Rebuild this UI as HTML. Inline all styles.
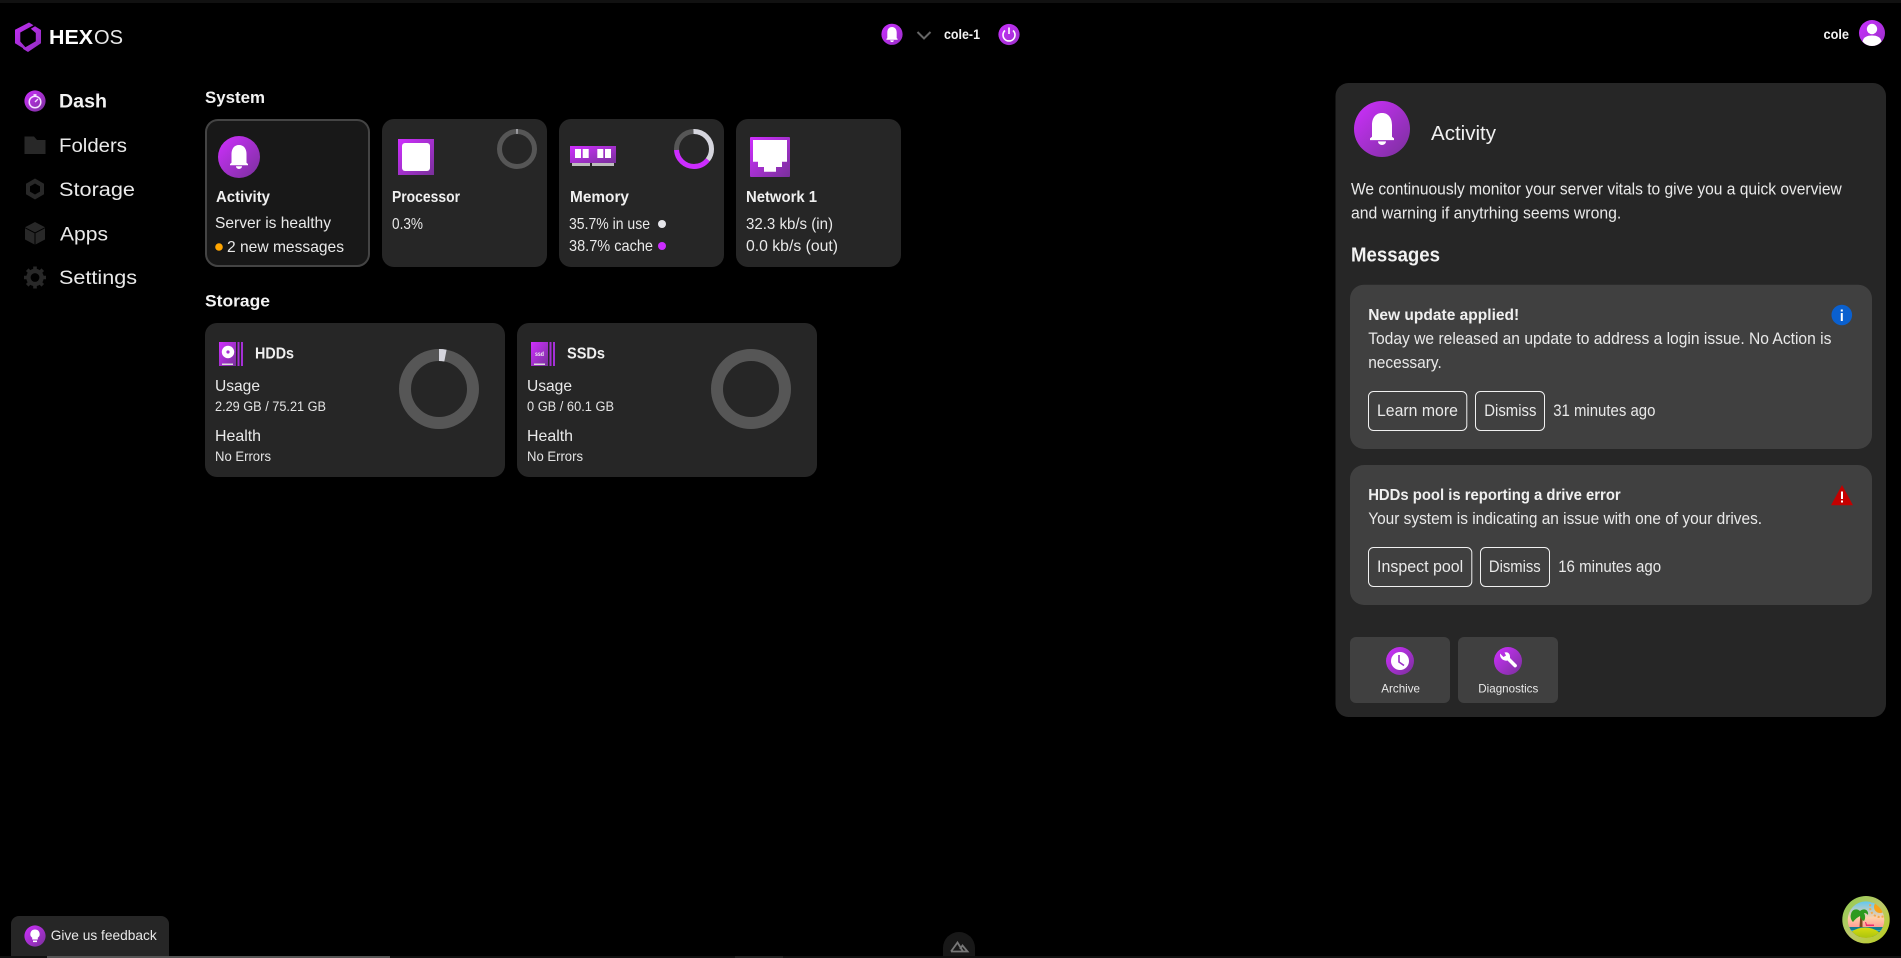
<!DOCTYPE html>
<html lang="en">
<head>
<meta charset="utf-8">
<title>HexOS Dashboard</title>
<style>
html,body{margin:0;padding:0;background:#000;width:1901px;height:958px;overflow:hidden}
svg{display:block}
text{font-family:"Liberation Sans",Arial,sans-serif;fill:#e9e9e9}
.b{font-weight:700;fill:#f2f2f2}
.t{font-size:16px;font-weight:700;fill:#f0f0f0}
.r{font-size:16px}
.s{font-size:13.5px;fill:#e4e4e4}
.h{font-size:17px;font-weight:700;fill:#f2f2f2}
.btn{fill:none;stroke:#f0f0f0;stroke-width:1}
.card{fill:#262626}
.msg{fill:#404040}
</style>
</head>
<body>
<svg width="1901" height="958" viewBox="0 0 1901 958" xmlns="http://www.w3.org/2000/svg">
<defs>
<linearGradient id="pg" x1="0" y1="0" x2="1" y2="1"><stop offset="0" stop-color="#cf2fff"/><stop offset="1" stop-color="#79309b"/></linearGradient>
<linearGradient id="lg" x1="0" y1="0" x2="1" y2="1"><stop offset="0" stop-color="#c62cf8"/><stop offset="1" stop-color="#8a2fb8"/></linearGradient>
<linearGradient id="av" x1="0" y1="0" x2="1" y2="1"><stop offset="0" stop-color="#c92fff"/><stop offset="1" stop-color="#9a2fc8"/></linearGradient>
<linearGradient id="sky" x1="0" y1="0" x2="0" y2="1"><stop offset="0" stop-color="#62c8ee"/><stop offset=".45" stop-color="#ffcfa8"/><stop offset=".7" stop-color="#ff9f96"/></linearGradient>
<linearGradient id="rng" x1="0" y1="0" x2="1" y2="1"><stop offset="0" stop-color="#8ecb4e"/><stop offset=".5" stop-color="#bcc86a"/><stop offset="1" stop-color="#b8d014"/></linearGradient>
<linearGradient id="isl" x1="0" y1="0" x2="0" y2="1"><stop offset="0" stop-color="#d8dc10"/><stop offset="1" stop-color="#5a9a08"/></linearGradient>
<clipPath id="ic"><circle cx="1866" cy="919.7" r="18.3"/></clipPath>
<symbol id="bell" viewBox="0 0 18 24"><path fill="#fff" d="M9 0C14 0 16.5 4 16.5 9V17.8L18 19V20.3H0V19L1.5 17.8V9C1.5 4 4 0 9 0ZM6 21.3H12C12 23 10.5 24 9 24S6 23 6 21.3Z"/></symbol>
</defs>

<rect width="1901" height="958" fill="#000"/>
<rect width="1901" height="3" fill="#111"/>

<!-- Logo -->
<path fill="url(#lg)" d="M29 22.5L33.5 25.2L20.3 32.5V41.5L25.5 47.3L24.3 49L15 43.3V29.7Z"/>
<path fill="url(#lg)" d="M35 26.3L41 30V43.3L28 52L22.8 48.7L35.8 41.3V33L30.8 28.8Z"/>
<text x="49" y="44" font-size="20" class="b" textLength="44" lengthAdjust="spacingAndGlyphs" style="fill:#fff">HEX</text>
<text x="94" y="44" font-size="20" textLength="29" lengthAdjust="spacingAndGlyphs" style="fill:#e8e8e8;font-weight:400">OS</text>

<!-- Center header -->
<circle cx="892" cy="34.3" r="10.6" fill="url(#av)"/>
<use href="#bell" x="886" y="27" width="12" height="15"/>
<path d="M917.5 32L924 38.5L930.5 32" fill="none" stroke="#666" stroke-width="2"/>
<text x="944" y="39" font-size="14" class="b" textLength="36" lengthAdjust="spacingAndGlyphs">cole-1</text>
<circle cx="1009" cy="34.5" r="10.6" fill="url(#av)"/>
<path d="M1005 30.5A6 6 0 1 0 1013 30.5" fill="none" stroke="#fff" stroke-width="1.6"/>
<path d="M1009 27.5V34" stroke="#fff" stroke-width="1.6"/>

<!-- User -->
<text x="1823.5" y="39" font-size="14" class="b" textLength="25.5" lengthAdjust="spacingAndGlyphs">cole</text>
<circle cx="1872" cy="33" r="13" fill="url(#av)"/>
<circle cx="1872" cy="29" r="5.2" fill="#fff"/>
<path d="M1862.5 41.5C1863.5 37 1867 35.5 1872 35.5S1880.5 37 1881.5 41.5C1879 44.5 1875.5 46 1872 46S1865 44.5 1862.5 41.5Z" fill="#fff"/>

<!-- Sidebar -->
<circle cx="35" cy="101" r="10.6" fill="url(#pg)"/>
<circle cx="35" cy="102" r="5.8" fill="none" stroke="#f5e5ff" stroke-width="1.5"/>
<path d="M35 102L38 99M33.5 94.8H36.5" stroke="#f5e5ff" stroke-width="1.4" fill="none"/>
<text x="59" y="107.5" font-size="19" class="b" textLength="48" lengthAdjust="spacingAndGlyphs">Dash</text>

<path fill="#282828" d="M24.5 136.5H34L37 140H45.5V154H24.5Z"/>
<text x="59" y="152" font-size="19" textLength="68" lengthAdjust="spacingAndGlyphs">Folders</text>

<path fill="#282828" fill-rule="evenodd" d="M35 178.5L44 183.7V194.3L35 199.5L26 194.3V183.7ZM35 183.5L30 186.4V191.6L35 194.5L40 191.6V186.4Z"/>
<text x="59" y="196" font-size="19" textLength="76" lengthAdjust="spacingAndGlyphs">Storage</text>

<path fill="#282828" d="M35 222L45 227.2L35 232.4L25 227.2ZM25 228.2L34.5 233.2V244.5L25 239.5ZM45 228.2V239.5L35.5 244.5V233.2Z"/>
<text x="60" y="240.5" font-size="19" textLength="48" lengthAdjust="spacingAndGlyphs">Apps</text>

<circle cx="35" cy="277.5" r="6.5" fill="none" stroke="#282828" stroke-width="4.5"/>
<path d="M35 266.5V288.5M24 277.5H46M27.2 269.7L42.8 285.3M42.8 269.7L27.2 285.3" stroke="#282828" stroke-width="3.6"/>
<circle cx="35" cy="277.5" r="4.4" fill="#000"/>
<text x="59" y="284" font-size="19" textLength="78" lengthAdjust="spacingAndGlyphs">Settings</text>

<!-- System -->
<text x="205" y="103" class="h" textLength="60" lengthAdjust="spacingAndGlyphs">System</text>

<!-- Activity card -->
<rect x="206" y="120" width="163" height="146" rx="12" fill="#181818" stroke="#444" stroke-width="2"/>
<circle cx="239" cy="157" r="21" fill="url(#pg)"/>
<use href="#bell" x="230" y="145" width="18" height="24"/>
<text x="216" y="202" class="t" textLength="54" lengthAdjust="spacingAndGlyphs">Activity</text>
<text x="215" y="228" class="r" textLength="116" lengthAdjust="spacingAndGlyphs">Server is healthy</text>
<circle cx="219" cy="247" r="3.8" fill="#ffa500"/>
<text x="227" y="252" class="r" textLength="117" lengthAdjust="spacingAndGlyphs">2 new messages</text>

<!-- Processor card -->
<rect x="382" y="119" width="165" height="148" rx="12" class="card"/>
<rect x="398" y="139" width="36" height="36" fill="url(#pg)"/>
<rect x="402" y="143" width="28" height="28" rx="3" fill="#fff"/>
<circle cx="517" cy="149" r="17.5" fill="none" stroke="#565656" stroke-width="5"/>
<circle cx="517" cy="149" r="17.5" fill="none" stroke="#d5d5dd" stroke-width="5" pathLength="100" stroke-dasharray="0.5 99.5" transform="rotate(-90 517 149)"/>
<text x="392" y="202" class="t" textLength="68" lengthAdjust="spacingAndGlyphs">Processor</text>
<text x="392" y="229" class="r" textLength="31" lengthAdjust="spacingAndGlyphs">0.3%</text>

<!-- Memory card -->
<rect x="559" y="119" width="165" height="148" rx="12" class="card"/>
<rect x="570" y="146" width="46" height="17" fill="url(#pg)"/>
<rect x="575" y="149" width="6" height="9" fill="#fff"/><rect x="582.7" y="149" width="6" height="9" fill="#fff"/>
<rect x="597.3" y="149" width="6" height="9" fill="#fff"/><rect x="605" y="149" width="6" height="9" fill="#fff"/>
<rect x="572" y="163" width="18" height="3" fill="#bdbdbd"/><rect x="592" y="163" width="22" height="3" fill="#bdbdbd"/>
<circle cx="694" cy="149" r="17.5" fill="none" stroke="#565656" stroke-width="5"/>
<circle cx="694" cy="149" r="17.5" fill="none" stroke="#d5d5dd" stroke-width="5" pathLength="100" stroke-dasharray="35.7 64.3" transform="rotate(-90 694 149)"/>
<circle cx="694" cy="149" r="17.5" fill="none" stroke="#cc2cff" stroke-width="5" pathLength="100" stroke-dasharray="38.7 61.3" stroke-dashoffset="-35.7" transform="rotate(-90 694 149)"/>
<text x="570" y="202" class="t" textLength="59" lengthAdjust="spacingAndGlyphs">Memory</text>
<text x="569" y="229" class="r" textLength="81" lengthAdjust="spacingAndGlyphs">35.7% in use</text>
<circle cx="662" cy="224" r="4" fill="#e5e5ea"/>
<text x="569" y="251" class="r" textLength="84" lengthAdjust="spacingAndGlyphs">38.7% cache</text>
<circle cx="662" cy="246" r="4" fill="#cc2cff"/>

<!-- Network card -->
<rect x="736" y="119" width="165" height="148" rx="12" class="card"/>
<rect x="750" y="137" width="40" height="40" rx="1" fill="url(#pg)"/>
<path fill="#fff" d="M753 140H787V161.7H782V167H776V171.7H764V167H758V161.7H753Z"/>
<text x="746" y="202" class="t" textLength="71" lengthAdjust="spacingAndGlyphs">Network 1</text>
<text x="746" y="229" class="r" textLength="87" lengthAdjust="spacingAndGlyphs">32.3 kb/s (in)</text>
<text x="746" y="251" class="r" textLength="92" lengthAdjust="spacingAndGlyphs">0.0 kb/s (out)</text>

<!-- Storage -->
<text x="205" y="306.7" class="h" textLength="65" lengthAdjust="spacingAndGlyphs">Storage</text>

<rect x="205" y="323" width="300" height="154" rx="12" class="card"/>
<rect x="219" y="342" width="17" height="24" fill="url(#pg)"/>
<rect x="237.5" y="342" width="2" height="24" fill="#a52fd6"/><rect x="241" y="342" width="2" height="24" fill="#a52fd6"/>
<circle cx="228" cy="352" r="6.2" fill="#fff"/><circle cx="228" cy="352" r="1.6" fill="#a52fd6"/>
<rect x="222" y="363.5" width="11" height="1.5" fill="#ddd"/>
<text x="255" y="358.7" class="t" textLength="39" lengthAdjust="spacingAndGlyphs">HDDs</text>
<text x="215" y="391" class="r" textLength="45" lengthAdjust="spacingAndGlyphs">Usage</text>
<text x="215" y="411" class="s" textLength="111" lengthAdjust="spacingAndGlyphs">2.29 GB / 75.21 GB</text>
<text x="215" y="441" class="r" textLength="46" lengthAdjust="spacingAndGlyphs">Health</text>
<text x="215" y="461" class="s" textLength="56" lengthAdjust="spacingAndGlyphs">No Errors</text>
<circle cx="439" cy="389" r="34" fill="none" stroke="#565656" stroke-width="12"/>
<circle cx="439" cy="389" r="34" fill="none" stroke="#d5d5dd" stroke-width="12" pathLength="100" stroke-dasharray="3.04 96.96" transform="rotate(-90 439 389)"/>

<rect x="517" y="323" width="300" height="154" rx="12" class="card"/>
<rect x="531" y="342" width="17" height="24" fill="url(#pg)"/>
<rect x="549.5" y="342" width="2" height="24" fill="#a52fd6"/><rect x="553" y="342" width="2" height="24" fill="#a52fd6"/>
<text x="535" y="356" font-size="6.5" class="b" textLength="9" lengthAdjust="spacingAndGlyphs">ssd</text>
<rect x="534" y="363.5" width="11" height="1.5" fill="#ddd"/>
<text x="567" y="358.7" class="t" textLength="38" lengthAdjust="spacingAndGlyphs">SSDs</text>
<text x="527" y="391" class="r" textLength="45" lengthAdjust="spacingAndGlyphs">Usage</text>
<text x="527" y="411" class="s" textLength="87" lengthAdjust="spacingAndGlyphs">0 GB / 60.1 GB</text>
<text x="527" y="441" class="r" textLength="46" lengthAdjust="spacingAndGlyphs">Health</text>
<text x="527" y="461" class="s" textLength="56" lengthAdjust="spacingAndGlyphs">No Errors</text>
<circle cx="751" cy="389" r="34" fill="none" stroke="#565656" stroke-width="12"/>

<!-- Activity panel -->
<rect x="1335.5" y="83" width="550.5" height="634" rx="13" class="card"/>
<circle cx="1382" cy="129" r="28" fill="url(#pg)"/>
<use href="#bell" x="1370" y="113" width="24" height="32" preserveAspectRatio="none"/>
<text x="1431" y="140" font-size="20" textLength="65" lengthAdjust="spacingAndGlyphs" style="fill:#f0f0f0">Activity</text>
<text x="1351" y="194.3" font-size="16.5" textLength="490.7" lengthAdjust="spacingAndGlyphs">We continuously monitor your server vitals to give you a quick overview</text>
<text x="1351" y="218.7" font-size="16.5" textLength="270.3" lengthAdjust="spacingAndGlyphs">and warning if anytrhing seems wrong.</text>
<text x="1351" y="261.7" font-size="20" class="b" textLength="89" lengthAdjust="spacingAndGlyphs">Messages</text>

<!-- Message 1 -->
<rect x="1350" y="284.7" width="522" height="164.3" rx="14" class="msg"/>
<text x="1368.2" y="320" class="t" textLength="151" lengthAdjust="spacingAndGlyphs">New update applied!</text>
<text x="1368.2" y="344" font-size="16.5" textLength="463.2" lengthAdjust="spacingAndGlyphs">Today we released an update to address a login issue. No Action is</text>
<text x="1368.2" y="368" font-size="16.5" textLength="73.6" lengthAdjust="spacingAndGlyphs">necessary.</text>
<circle cx="1841.8" cy="315" r="10.3" fill="#0a60cf"/>
<rect x="1840.8" y="313" width="2" height="8" fill="#fff"/><rect x="1840.8" y="309.5" width="2" height="2" fill="#fff"/>
<rect x="1368.5" y="391.5" width="98.3" height="39" rx="5" class="btn"/>
<text x="1377" y="416" font-size="16.5" textLength="80.9" lengthAdjust="spacingAndGlyphs">Learn more</text>
<rect x="1475.5" y="391.5" width="69" height="39" rx="5" class="btn"/>
<text x="1484.3" y="416" font-size="16.5" textLength="52.1" lengthAdjust="spacingAndGlyphs">Dismiss</text>
<text x="1553.2" y="416" font-size="16.5" textLength="102.2" lengthAdjust="spacingAndGlyphs">31 minutes ago</text>

<!-- Message 2 -->
<rect x="1350" y="465" width="522" height="140" rx="14" class="msg"/>
<text x="1368.2" y="500" class="t" textLength="252.5" lengthAdjust="spacingAndGlyphs">HDDs pool is reporting a drive error</text>
<text x="1368.2" y="524" font-size="16.5" textLength="393.9" lengthAdjust="spacingAndGlyphs">Your system is indicating an issue with one of your drives.</text>
<path d="M1842 485L1853 505.3H1831Z" fill="#c40000"/>
<rect x="1841" y="491.5" width="2" height="7.5" fill="#fff"/><rect x="1841" y="500.5" width="2" height="2" fill="#fff"/>
<rect x="1368.5" y="547.5" width="103.3" height="39" rx="5" class="btn"/>
<text x="1377" y="572" font-size="16.5" textLength="86.2" lengthAdjust="spacingAndGlyphs">Inspect pool</text>
<rect x="1480.5" y="547.5" width="69" height="39" rx="5" class="btn"/>
<text x="1488.9" y="572" font-size="16.5" textLength="51.8" lengthAdjust="spacingAndGlyphs">Dismiss</text>
<text x="1558.2" y="572" font-size="16.5" textLength="102.9" lengthAdjust="spacingAndGlyphs">16 minutes ago</text>

<!-- Tool buttons -->
<rect x="1350" y="637" width="100" height="66" rx="6" class="msg"/>
<circle cx="1400" cy="661" r="14" fill="url(#pg)"/>
<circle cx="1400" cy="661" r="9" fill="#fff"/>
<path d="M1399 655V662L1404 665.5" fill="none" stroke="#9a2fc8" stroke-width="1.6"/>
<text x="1381.3" y="692.3" font-size="12" textLength="38.7" lengthAdjust="spacingAndGlyphs">Archive</text>
<rect x="1458" y="637" width="100" height="66" rx="6" class="msg"/>
<circle cx="1508" cy="661" r="14" fill="url(#pg)"/>
<path d="M1500 653.5L1503.5 657L1506 655.5L1504.5 652.5C1507 651.5 1510 653 1510 656.5L1510 658L1516.5 664.5C1518 666 1515.5 668.5 1514 667L1507.5 660.5C1504 661.5 1499.5 658.5 1500 653.5Z" fill="#fff"/>
<text x="1478.3" y="692.3" font-size="12" textLength="60" lengthAdjust="spacingAndGlyphs">Diagnostics</text>

<!-- Bottom bar -->
<rect y="956" width="1901" height="2" fill="#111"/>
<rect x="47" y="956" width="343" height="2" fill="#555"/>
<rect x="735" y="956" width="48" height="2" fill="#222"/>

<!-- Feedback -->
<path d="M11 956V924A8 8 0 0 1 19 916H161A8 8 0 0 1 169 924V956Z" fill="#262626"/>
<circle cx="35" cy="936" r="10.6" fill="url(#pg)"/>
<path d="M35 929.5A4.6 4.6 0 0 1 37.8 937.8V939.5H32.2V937.8A4.6 4.6 0 0 1 35 929.5Z" fill="#fff"/>
<rect x="33" y="940.5" width="4" height="1.6" fill="#fff"/>
<text x="50.7" y="940" font-size="14" textLength="106" lengthAdjust="spacingAndGlyphs">Give us feedback</text>

<!-- Nuxt devtools -->
<path d="M943 956V948A16 16 0 0 1 975 948V956Z" fill="#181818"/>
<path d="M951 951.5H963L957.5 942.5L951 951.5M963 951.5H967.5L962.5 945.5L960 949" fill="none" stroke="#777" stroke-width="1.8"/>

<!-- Island badge -->
<circle cx="1866" cy="919.7" r="23.7" fill="url(#rng)"/>
<circle cx="1866" cy="919.7" r="18.3" fill="url(#sky)"/>
<g clip-path="url(#ic)">
<circle cx="1880" cy="907" r="6" fill="#f9a21b"/>
<circle cx="1880" cy="907" r="10" fill="none" stroke="#f7a84a" stroke-width="2" stroke-dasharray="2 2"/>
<rect x="1846" y="927" width="40" height="10" fill="#127c90"/>
<rect x="1846" y="930" width="40" height="1" fill="#3cb0c0"/>
<path d="M1859.5 927L1860.5 912H1862.5L1862.5 927Z" fill="#7a4a1c"/>
<path d="M1860 911C1857 908 1852 909 1851 914C1850 917 1851 920 1853 922C1855 919 1858 917 1860 916C1861 919 1862 920 1864 921C1866 918 1865 915 1864 913C1866 913 1867 914 1868 915C1869 911 1865 907 1860 911Z" fill="#2d9a1f"/>
<path d="M1865 922H1866L1867 924.5H1874V926H1866Z" fill="#ee2a6a"/>
<ellipse cx="1865" cy="942" rx="19" ry="14.5" fill="url(#isl)"/>
</g>
</svg>
</body>
</html>
